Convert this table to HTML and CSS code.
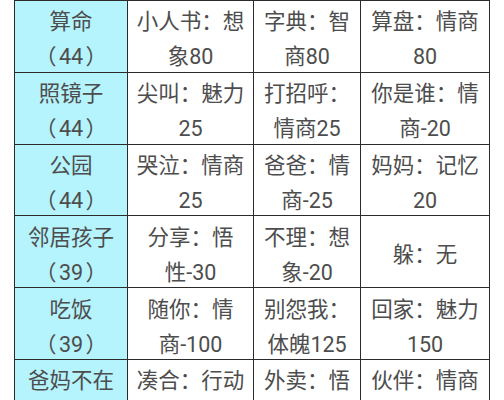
FILE: index.html
```html
<!DOCTYPE html>
<html lang="zh">
<head>
<meta charset="utf-8">
<link rel="stylesheet" href="styles.css">
</head>
<body>
<table class="grid">
  <colgroup>
    <col class="c1"><col class="c2"><col class="c3"><col class="c4">
  </colgroup>
  <tr>
    <td class="head"><div class="t">算命<br><span class="lp">（</span>44<span class="rp">）</span></div></td>
    <td><div class="t">小人书：想<br>象80</div></td>
    <td><div class="t">字典：智<br>商80</div></td>
    <td><div class="t">算盘：情商<br>80</div></td>
  </tr>
  <tr>
    <td class="head"><div class="t">照镜子<br><span class="lp">（</span>44<span class="rp">）</span></div></td>
    <td><div class="t">尖叫：魅力<br>25</div></td>
    <td><div class="t">打招呼：<br>情商25</div></td>
    <td><div class="t">你是谁：情<br>商-20</div></td>
  </tr>
  <tr>
    <td class="head"><div class="t">公园<br><span class="lp">（</span>44<span class="rp">）</span></div></td>
    <td><div class="t">哭泣：情商<br>25</div></td>
    <td><div class="t">爸爸：情<br>商-25</div></td>
    <td><div class="t">妈妈：记忆<br>20</div></td>
  </tr>
  <tr>
    <td class="head"><div class="t">邻居孩子<br><span class="lp">（</span>39<span class="rp">）</span></div></td>
    <td><div class="t">分享：悟<br>性-30</div></td>
    <td><div class="t">不理：想<br>象-20</div></td>
    <td><div class="t">躲：无</div></td>
  </tr>
  <tr>
    <td class="head"><div class="t">吃饭<br><span class="lp">（</span>39<span class="rp">）</span></div></td>
    <td><div class="t">随你：情<br>商-100</div></td>
    <td><div class="t">别怨我：<br>体魄125</div></td>
    <td><div class="t">回家：魅力<br>150</div></td>
  </tr>
  <tr>
    <td class="head"><div class="t">爸妈不在<br><span class="lp">（</span>39<span class="rp">）</span></div></td>
    <td><div class="t">凑合：行动<br>10</div></td>
    <td><div class="t">外卖：悟<br>性10</div></td>
    <td><div class="t">伙伴：情商<br>10</div></td>
  </tr>
</table>
</body>
</html>
```
FILE: styles.css
```css
html, body {
  margin: 0;
  padding: 0;
  background: #ffffff;
}
body {
  padding-left: 14px;
  font-family: Roboto, "Noto Sans CJK SC", sans-serif;
}
.grid {
  border-collapse: collapse;
  table-layout: fixed;
  width: 475px;
  color: #4d4d4d;
  font-size: 21.5px;
  line-height: 35px;
}
.c1 { width: 113px; }
.c2 { width: 126px; }
.c3 { width: 107px; }
.c4 { width: 129px; }
.grid tr {
  height: 71.8px;
}
.grid td {
  border: 1.5px solid #2b2b2b;
  padding: 0;
  text-align: center;
  vertical-align: middle;
  white-space: nowrap;
  overflow: hidden;
  background: #ffffff;
}
.grid td.head {
  background: #b5f3fd;
}
.t {
  margin-top: 3px;
  margin-bottom: -3px;
}
.lp {
  margin-right: 2.5px;
}
.rp {
  margin-left: 2.5px;
}
```
